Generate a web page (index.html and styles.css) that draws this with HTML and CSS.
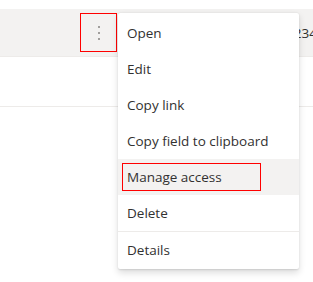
FILE: index.html
```html
<!DOCTYPE html>
<html>
<head>
<meta charset="utf-8">
<link rel="stylesheet" href="styles.css">
</head>
<body>
<div class="list">
  <div class="header-row">
    <button class="more-btn" aria-label="More">
      <span class="dot"></span><span class="dot"></span><span class="dot"></span>
    </button>
    <span class="cell-text">1234</span>
  </div>
  <div class="row"></div>
</div>
<ul class="menu">
  <li class="item"><span class="label">Open</span></li>
  <li class="item"><span class="label">Edit</span></li>
  <li class="item"><span class="label">Copy link</span></li>
  <li class="item"><span class="label">Copy field to clipboard</span></li>
  <li class="item item-hover"><span class="label label-marked">Manage access</span></li>
  <li class="item"><span class="label">Delete</span></li>
  <li class="divider"></li>
  <li class="item"><span class="label">Details</span></li>
</ul>
</body>
</html>
```
FILE: styles.css
```css
html, body {
  margin: 0;
  padding: 0;
  overflow: hidden;
  background: #ffffff;
  font-family: "Open Sans", "Noto Sans", sans-serif;
  font-size: 13.5px;
  color: #323130;
}
.list {
  padding-top: 9px;
}
.header-row {
  display: flex;
  align-items: center;
  height: 47px;
  background: #f3f2f1;
  border-bottom: 1px solid #edebe9;
  padding-left: 80px;
  white-space: nowrap;
}
.more-btn {
  box-sizing: border-box;
  flex: 0 0 auto;
  width: 37px;
  height: 39px;
  margin: 0;
  padding: 0;
  border: 1px solid #ff0000;
  background: transparent;
  display: flex;
  flex-direction: column;
  align-items: center;
  justify-content: center;
  gap: 4px;
}
.dot {
  width: 2px;
  height: 2px;
  background: #a19f9d;
}
.cell-text {
  flex: 0 0 auto;
  margin-left: 169px;
}
.row {
  height: 49px;
  border-bottom: 1px solid #edebe9;
}
.menu {
  position: absolute;
  left: 118px;
  top: 13px;
  width: 181px;
  margin: 0;
  padding: 2px 0 1px;
  list-style: none;
  background: #ffffff;
  border-radius: 2px;
  box-shadow: 0 3.2px 7.2px rgba(0,0,0,0.132), 0 0.6px 1.8px rgba(0,0,0,0.108);
}
.item {
  display: flex;
  align-items: center;
  height: 36px;
  padding-left: 4px;
}
.item-hover {
  background: #f3f2f1;
}
.label {
  box-sizing: border-box;
  display: flex;
  align-items: center;
  height: 28px;
  padding-left: 4px;
  border: 1px solid transparent;
  white-space: nowrap;
}
.label-marked {
  width: 139px;
  border-color: #ff0000;
}
.divider {
  height: 1px;
  background: #edebe9;
}
```
